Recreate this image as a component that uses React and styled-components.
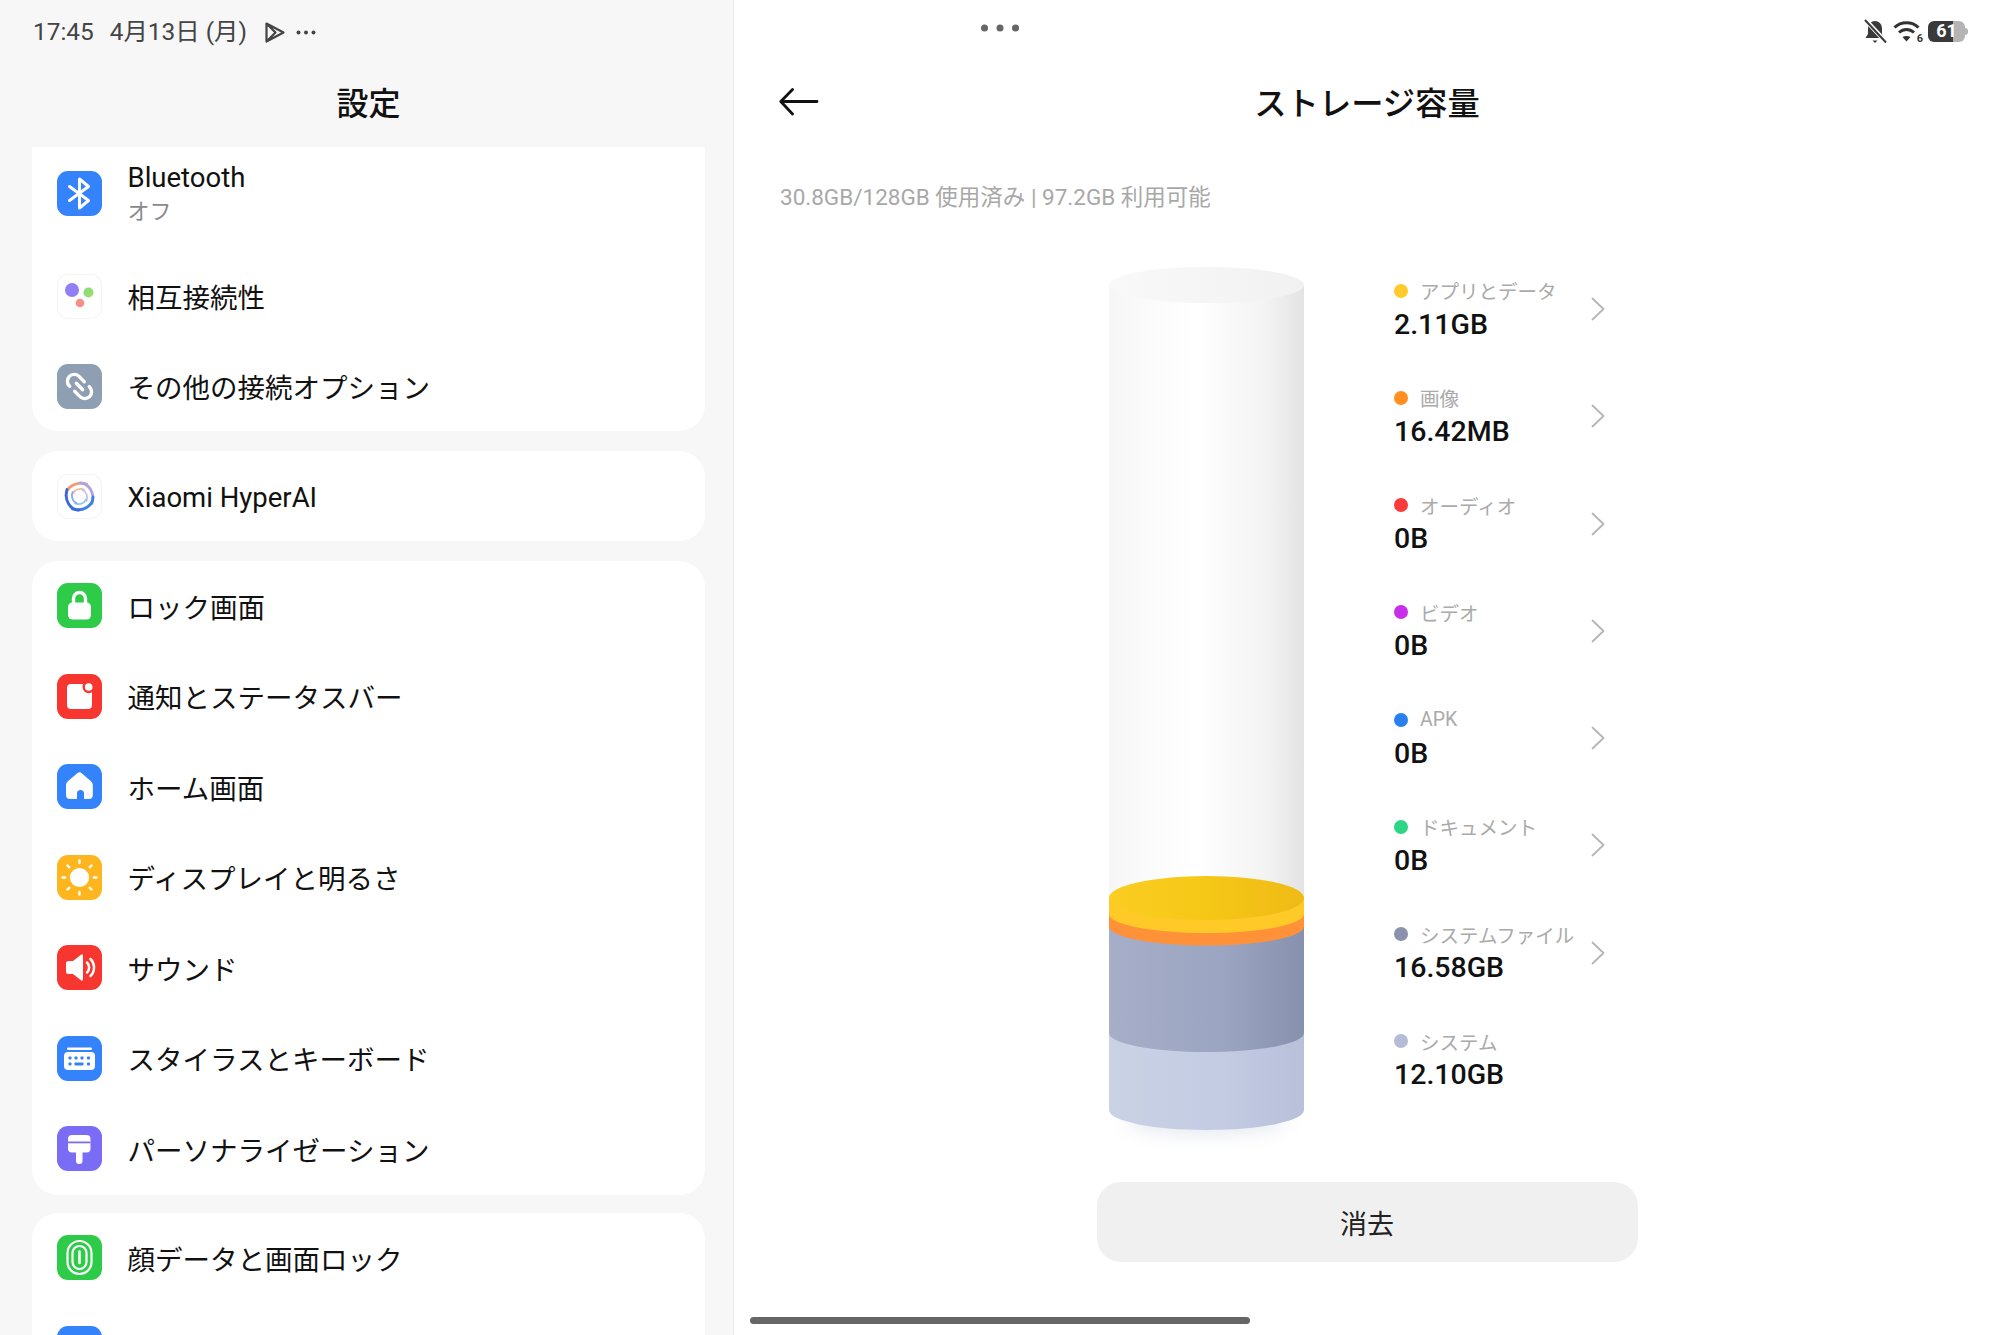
import React from "react";
import styled, { createGlobalStyle } from "styled-components";

const Global = createGlobalStyle`
  html, body { margin: 0; padding: 0; background: #fff; }
  body { font-family: Roboto, "Noto Sans CJK JP", sans-serif; -webkit-font-smoothing: antialiased; }
  #root { width: 2000px; height: 1335px; }
`;

const Screen = styled.div`
  position: relative;
  display: flex;
  width: 2000px;
  height: 1335px;
  overflow: hidden;
`;
const SidePanel = styled.aside`
  flex: 0 0 734px;
  height: 100%;
  box-sizing: border-box;
  padding: 0 28px 0 32px;
  background: #f7f7f7;
  border-right: 1px solid #ededed;
  overflow: hidden;
`;
const MainPanel = styled.main`
  flex: 1;
  display: flex;
  flex-direction: column;
  height: 100%;
  background: #fff;
`;
const LeftStatus = styled.div`
  height: 64px;
  margin-left: 1px;
  display: flex;
  align-items: center;
  color: #444;
  font-size: 24.4px;
  line-height: 1;
`;
const Clock = styled.span`
  margin-right: 16px;
`;
const DateText = styled.span`
  margin-right: 17px;
`;
const StatusDots = styled.svg`
  margin-left: 10px;
`;
const SideTitle = styled.h1`
  margin: 0;
  box-sizing: border-box;
  height: 78px;
  padding-bottom: 4px;
  display: flex;
  align-items: center;
  justify-content: center;
  font-size: 32px;
  font-weight: 500;
  color: #111;
`;
const Card = styled.section`
  margin-top: ${(p) => p.$gap}px;
  background: #fff;
  border-radius: ${(p) => (p.$clipTop ? "0 0 26px 26px" : "26px")};
`;
const Row = styled.div`
  box-sizing: border-box;
  height: ${(p) => p.$h || 90.5}px;
  padding: 0 25px ${(p) => p.$pb ?? 1.5}px;
  display: flex;
  align-items: center;
  gap: 25.5px;
`;
const IconBox = styled.div`
  flex: 0 0 45px;
  width: 45px;
  height: 45px;
  border-radius: 11px;
  background: ${(p) => p.$bg};
  box-shadow: ${(p) => (p.$outlined ? "inset 0 0 0 1px #f4f4f4" : "none")};
  overflow: hidden;
  svg { display: block; }
`;
const RowTexts = styled.div`
  display: flex;
  flex-direction: column;
  margin-top: ${(p) => p.$mt ?? 6}px;
`;
const RowTitle = styled.div`
  font-size: 27.5px;
  line-height: 36px;
  color: #111;
`;
const RowSub = styled.div`
  font-size: 22px;
  line-height: 32px;
  color: #8a8a8a;
`;
const RightStatus = styled.div`
  height: 62px;
  flex: none;
  display: flex;
  align-items: center;
  justify-content: flex-end;
  padding-right: 32px;
  gap: 6px;
`;
const WifiWrap = styled.div`
  position: relative;
  width: 29px;
  height: 24px;
`;
const WifiBadge = styled.span`
  position: absolute;
  right: -1px;
  bottom: -2px;
  font-size: 11px;
  font-weight: 700;
  color: #333;
`;
const Battery = styled.div`
  position: relative;
  width: 40px;
  height: 21px;
`;
const BatteryTrack = styled.div`
  width: 37px;
  height: 21px;
  border-radius: 6px;
  background: linear-gradient(90deg, #3a3a3a 0 68%, #b4b4b4 68% 100%);
  display: flex;
  align-items: center;
  justify-content: center;
  font-size: 18px;
  font-weight: 700;
  color: #fff;
  line-height: 1;
`;
const BatteryCap = styled.div`
  position: absolute;
  right: 0;
  top: 7px;
  width: 3px;
  height: 7px;
  border-radius: 0 3px 3px 0;
  background: #b4b4b4;
`;
const Header = styled.header`
  position: relative;
  flex: none;
  box-sizing: border-box;
  height: 82px;
  padding-bottom: 4px;
  display: flex;
  align-items: center;
  justify-content: center;
`;
const BackArrow = styled.svg`
  position: absolute;
  left: 45px;
  top: 26px;
`;
const MainTitle = styled.h2`
  margin: 0;
  font-size: 32.3px;
  font-weight: 500;
  color: #111;
`;
const Usage = styled.div`
  flex: none;
  height: 32px;
  margin-top: 37px;
  margin-left: 46px;
  font-size: 22.5px;
  line-height: 32px;
  color: #a8a8a8;
`;
const ChartArea = styled.div`
  flex: none;
  height: 926px;
  margin-top: 43px;
  padding-left: 375px;
  display: flex;
  align-items: flex-start;
  gap: 90px;
`;
const CylinderSvg = styled.svg`
  flex: none;
  margin-top: 11px;
  overflow: visible;
`;
const Legend = styled.ul`
  list-style: none;
  margin: 0;
  padding: 0;
  width: 211px;
`;
const LegendItem = styled.li`
  box-sizing: border-box;
  height: 107.25px;
  padding-top: 2px;
  display: flex;
  align-items: center;
  justify-content: space-between;
`;
const LegendLabel = styled.div`
  display: flex;
  align-items: center;
  gap: 12px;
  height: 28px;
  font-size: 19.5px;
  color: #aaa;
  white-space: nowrap;
`;
const Dot = styled.span`
  flex: none;
  width: 14px;
  height: 14px;
  border-radius: 50%;
  background: ${(p) => p.$color};
`;
const LegendValue = styled.div`
  height: 40px;
  line-height: 40px;
  font-size: 28.5px;
  font-weight: 500;
  color: #111;
`;
const ChevronSvg = styled.svg`
  margin-top: -3px;
`;
const EraseButton = styled.button`
  flex: none;
  align-self: center;
  width: 541px;
  height: 80px;
  border: none;
  border-radius: 24px;
  background: #f0f0f0;
  color: #222;
  font-family: inherit;
  font-size: 27px;
`;
const Handle = styled.svg`
  position: absolute;
  left: 980px;
  top: 23px;
`;
const HomeBar = styled.div`
  position: absolute;
  left: 750px;
  top: 1317px;
  width: 500px;
  height: 7px;
  border-radius: 4px;
  background: #666;
`;

const W = "#fff";
const S = { width: 45, height: 45, viewBox: "0 0 45 45", fill: "none" };

const BluetoothIcon = () => (
  <IconBox $bg="#3483fb"><svg {...S}><path d="M12.5 15.5 31.5 29.5 22.5 37V8L31.5 15.5 12.5 29.5" stroke={W} strokeWidth="3" strokeLinecap="round" strokeLinejoin="round"/></svg></IconBox>
);
const InteropIcon = () => (
  <IconBox $bg="#fff" $outlined><svg {...S}>
    <defs><linearGradient id="gg" x1="0" y1="0" x2="1" y2="1"><stop offset="0" stopColor="#7fdc7c"/><stop offset="1" stopColor="#a8dc6a"/></linearGradient></defs>
    <circle cx="15" cy="16" r="7" fill="#917ff5"/><circle cx="31.5" cy="18.5" r="5" fill="url(#gg)"/><circle cx="23" cy="29" r="4.3" fill="#f98f84"/>
  </svg></IconBox>
);
const LinkIcon = () => (
  <IconBox $bg="#8e9fb3"><svg {...S}><g transform="rotate(45 22.5 22.5)" stroke={W} strokeWidth="3.4" strokeLinecap="round">
    <path d="M22.500 15.700H15a6.800 6.800 0 0 0 0 13.600H15.500"/><path d="M22.500 29.300H30a6.800 6.800 0 0 0 0-13.600H29.500"/><path d="M18 22.500H27"/>
  </g></svg></IconBox>
);
const swirl = [
  { a: 0, outer: "#f29a6a", inner: "#f4b59c" },
  { a: 90, outer: "#b0a4e0", inner: "#c4c2ee" },
  { a: 180, outer: "#3f7fe6", inner: "#8cc0f0" },
  { a: 270, outer: "#3a6ad8", inner: "#86a8ec" },
];
const HyperIcon = () => (
  <IconBox $bg="#fff" $outlined><svg {...S} strokeLinecap="round">
    {swirl.map((s) => (
      <g key={s.a} transform={`rotate(${s.a} 22.5 22.5)`}>
        <path d="M9 22C9 13 19 7 29.500 10" stroke={s.outer} strokeWidth="2.800"/>
        <path d="M16 19.500C18 15 23 14 27 15.500" stroke={s.inner} strokeWidth="1.800"/>
      </g>
    ))}
  </svg></IconBox>
);
const LockIcon = () => (
  <IconBox $bg="#2dcb47"><svg {...S}><path d="M16.5 21V15.5a6 6 0 0 1 12 0V21" stroke={W} strokeWidth="3.4"/><rect x="11" y="19.5" width="23" height="17" rx="4.5" fill={W}/></svg></IconBox>
);
const NotifyIcon = () => (
  <IconBox $bg="#f7372f"><svg {...S}><rect x="10" y="10" width="25" height="25" rx="4" fill={W}/><circle cx="31.7" cy="13" r="6.2" fill="#f7372f"/><circle cx="31.7" cy="13" r="3.8" fill={W}/></svg></IconBox>
);
const HomeIcon = () => (
  <IconBox $bg="#3483fb"><svg {...S}><path fillRule="evenodd" clipRule="evenodd" d="M20.3 9.2a3.4 3.4 0 0 1 4.4 0l9.3 8a5 5 0 0 1 1.8 3.8V31a4 4 0 0 1-4 4h-4.8v-5.5a3.5 3.5 0 0 0-7 0V35H13a4 4 0 0 1-4-4V21a5 5 0 0 1 1.8-3.8z" fill={W}/></svg></IconBox>
);
const SunIcon = () => (
  <IconBox $bg="#ffb61e"><svg {...S}><circle cx="22.5" cy="22.5" r="9.6" fill={W}/>
    <g stroke={W} strokeWidth="2.4" strokeLinecap="round">
      {[0,45,90,135,180,225,270,315].map((a) => (<path key={a} d="M22.5 5.5V8" transform={`rotate(${a} 22.5 22.5)`}/>))}
    </g></svg></IconBox>
);
const SoundIcon = () => (
  <IconBox $bg="#f7372f"><svg {...S}><path d="M9 18.5a2.5 2.5 0 0 1 2.5-2.5H16l8-6.3a1.2 1.2 0 0 1 2 1V34.3a1.2 1.2 0 0 1-2 1L16 29h-4.500a2.500 2.500 0 0 1-2.500-2.500z" fill={W}/><path d="M30 17.500a7 7 0 0 1 0 10M33.500 14a12 12 0 0 1 0 17" stroke={W} strokeWidth="2.500" strokeLinecap="round"/></svg></IconBox>
);
const KeyboardIcon = () => (
  <IconBox $bg="#3483fb"><svg {...S}>
    <rect x="10" y="11.500" width="25" height="2.500" rx="1.250" fill={W}/><rect x="7" y="16" width="31" height="18" rx="4" fill={W}/>
    <g fill="#3483fb"><rect x="11.500" y="20.500" width="3" height="3" rx=".8"/><rect x="17.500" y="20.500" width="3" height="3" rx=".8"/><rect x="23.500" y="20.500" width="3" height="3" rx=".8"/><rect x="30" y="20.500" width="3" height="3" rx=".8"/><rect x="11.500" y="26.500" width="3" height="3" rx=".8"/><rect x="17.500" y="26.500" width="9" height="3" rx=".8"/><rect x="30" y="26.500" width="3" height="3" rx=".8"/></g>
  </svg></IconBox>
);
const BrushIcon = () => (
  <IconBox $bg="#7a6cf5"><svg {...S}><rect x="11" y="9" width="22.500" height="17.500" rx="4" fill={W}/><rect x="11" y="15.500" width="22.500" height="1.800" fill="#7a6cf5"/><rect x="19" y="24" width="6.500" height="14" rx="3" fill={W}/></svg></IconBox>
);
const FingerIcon = () => (
  <IconBox $bg="#2dcb47"><svg {...S} stroke={W} strokeWidth="2.200"><rect x="10.500" y="6" width="24" height="33" rx="12"/><rect x="15.500" y="11" width="14" height="23" rx="7"/><path d="M22.500 16.500V28" strokeLinecap="round" strokeWidth="2.600"/></svg></IconBox>
);
const BlankBlueIcon = () => <IconBox $bg="#3483fb" />;

const group1 = [
  { icon: <InteropIcon />, title: "相互接続性", h: 91 },
  { icon: <LinkIcon />, title: "その他の接続オプション", h: 89.5 },
];
const group3 = [
  { icon: <LockIcon />, title: "ロック画面" },
  { icon: <NotifyIcon />, title: "通知とステータスバー" },
  { icon: <HomeIcon />, title: "ホーム画面" },
  { icon: <SunIcon />, title: "ディスプレイと明るさ" },
  { icon: <SoundIcon />, title: "サウンド" },
  { icon: <KeyboardIcon />, title: "スタイラスとキーボード" },
  { icon: <BrushIcon />, title: "パーソナライゼーション" },
];
const legend = [
  { color: "#ffcb2b", label: "アプリとデータ", value: "2.11GB", more: true },
  { color: "#ff8f1f", label: "画像", value: "16.42MB", more: true },
  { color: "#f93b3b", label: "オーディオ", value: "0B", more: true },
  { color: "#c92ee8", label: "ビデオ", value: "0B", more: true },
  { color: "#2a7fee", label: "APK", value: "0B", more: true },
  { color: "#2ed585", label: "ドキュメント", value: "0B", more: true },
  { color: "#8a92ae", label: "システムファイル", value: "16.58GB", more: true },
  { color: "#b4bcd8", label: "システム", value: "12.10GB", more: false },
];

const Cylinder = () => {
  const L = 0, R = 195, rx = 97.5;
  const seg = (top, bottom, rb) => `M${L} ${top}V${bottom}A${rx} ${rb} 0 0 0 ${R} ${bottom}V${top}Z`;
  return (
    <CylinderSvg width="195" height="885" viewBox="0 267 195 885">
      <defs>
        <linearGradient id="bodyW" x1="0" x2="1" y1="0" y2="0"><stop offset="0" stopColor="#f6f6f6"/><stop offset=".15" stopColor="#fafafa"/><stop offset=".45" stopColor="#fff"/><stop offset=".8" stopColor="#f3f3f3"/><stop offset="1" stopColor="#e3e3e3"/></linearGradient>
        <linearGradient id="topW" x1="0" x2="1" y1="0" y2="0"><stop offset="0" stopColor="#f9f9f9"/><stop offset="1" stopColor="#f1f1f1"/></linearGradient>
        <linearGradient id="sysF" x1="0" x2="1" y1="0" y2="0"><stop offset="0" stopColor="#a6aec9"/><stop offset=".6" stopColor="#9ba4c0"/><stop offset="1" stopColor="#8790ae"/></linearGradient>
        <linearGradient id="sys" x1="0" x2="1" y1="0" y2="0"><stop offset="0" stopColor="#cad2e5"/><stop offset=".6" stopColor="#c3cbe3"/><stop offset="1" stopColor="#b8c0da"/></linearGradient>
        <linearGradient id="topY" x1="0" x2="1" y1="0" y2="0"><stop offset="0" stopColor="#fbcd22"/><stop offset=".5" stopColor="#f5c716"/><stop offset="1" stopColor="#efba16"/></linearGradient>
        <filter id="soft" x="-20%" y="-100%" width="140%" height="300%"><feGaussianBlur stdDeviation="9"/></filter>
      </defs>
      <ellipse cx="97.5" cy="1120" rx="80" ry="15" fill="#aab2cc" opacity=".28" filter="url(#soft)"/>
      <path d={seg(285, 900, 20)} fill="url(#bodyW)"/>
      <ellipse cx="97.5" cy="285" rx={rx} ry="18" fill="url(#topW)"/>
      <path d={seg(1000, 1110, 20)} fill="url(#sys)"/>
      <path d={seg(920, 1033, 19)} fill="url(#sysF)"/>
      <path d={seg(905, 926.500, 19)} fill="#ff9138"/>
      <path d={seg(898, 914, 19)} fill="#ffca28"/>
      <ellipse cx="97.5" cy="898" rx={rx} ry="22" fill="url(#topY)"/>
    </CylinderSvg>
  );
};

const Chevron = () => (
  <ChevronSvg width="14" height="24" viewBox="0 0 14 24" fill="none"><path d="M1.500 1.500 12.500 12 1.500 22.500" stroke="#b5b5b5" strokeWidth="1.800" strokeLinecap="round" strokeLinejoin="round"/></ChevronSvg>
);

export default function App() {
  return (
    <Screen>
      <Global />
      <SidePanel>
        <LeftStatus>
          <Clock>17:45</Clock>
          <DateText>4月13日 (月)</DateText>
          <svg width="22" height="23" viewBox="0 0 22 23" fill="none" stroke="#444" strokeWidth="2.200" strokeLinejoin="round"><path d="M2.500 2.500 19.500 11.500 2.500 20.500zM2.500 2.500 11.500 11.500 2.500 20.500"/></svg>
          <StatusDots width="20" height="5" viewBox="0 0 20 5" fill="#444"><circle cx="2.500" cy="2.500" r="2"/><circle cx="10" cy="2.500" r="2"/><circle cx="17.500" cy="2.500" r="2"/></StatusDots>
        </LeftStatus>
        <SideTitle>設定</SideTitle>
        <Card $gap={4.5} $clipTop>
          <Row $h={104} $pb={10}>
            <BluetoothIcon />
            <RowTexts $mt={0}>
              <RowTitle>Bluetooth</RowTitle>
              <RowSub>オフ</RowSub>
            </RowTexts>
          </Row>
          {group1.map((r) => (
            <Row key={r.title} $h={r.h} $pb={0}>{r.icon}<RowTexts><RowTitle>{r.title}</RowTitle></RowTexts></Row>
          ))}
        </Card>
        <Card $gap={20}>
          <Row $h={90} $pb={0}><HyperIcon /><RowTexts $mt={4}><RowTitle>Xiaomi HyperAI</RowTitle></RowTexts></Row>
        </Card>
        <Card $gap={20}>
          {group3.map((r) => (
            <Row key={r.title}>{r.icon}<RowTexts><RowTitle>{r.title}</RowTitle></RowTexts></Row>
          ))}
        </Card>
        <Card $gap={18.5}>
          <Row><FingerIcon /><RowTexts><RowTitle>顔データと画面ロック</RowTitle></RowTexts></Row>
          <Row><BlankBlueIcon /></Row>
        </Card>
      </SidePanel>
      <MainPanel>
        <RightStatus>
          <svg width="24" height="25" viewBox="0 0 24 25" fill="none">
            <path d="M12 2a7 7 0 0 0-7 7v6l-2.500 4h19L19 15V9a7 7 0 0 0-7-7z" fill="#3a3a3a"/><path d="M9.500 21.500h5l-2.500 2.500z" fill="#3a3a3a"/>
            <path d="M2 0.500 23 23" stroke="#fff" strokeWidth="4.500"/><path d="M2 1 23 23.500" stroke="#3a3a3a" strokeWidth="2"/>
          </svg>
          <WifiWrap>
            <svg width="29" height="24" viewBox="0 0 29 24" fill="none" stroke="#333" strokeWidth="3"><path d="M1.500 8.500C8 2 19 2 25.500 8.500"/><path d="M6 13.500c4.500-4 10.500-4 15 0"/><path d="M9.500 18 13.500 22.500 17.500 18c-2.500-1.500-5.500-1.500-8 0z" fill="#333" stroke="none"/></svg>
            <WifiBadge>6</WifiBadge>
          </WifiWrap>
          <Battery>
            <BatteryTrack>61</BatteryTrack>
            <BatteryCap />
          </Battery>
        </RightStatus>
        <Header>
          <BackArrow width="40" height="28" viewBox="0 0 40 28" fill="none" stroke="#111" strokeWidth="2.800" strokeLinecap="round" strokeLinejoin="round"><path d="M38 13.500H2.500M13.500 1.500 1.800 13.500 13.500 26"/></BackArrow>
          <MainTitle>ストレージ容量</MainTitle>
        </Header>
        <Usage>30.8GB/128GB 使用済み | 97.2GB 利用可能</Usage>
        <ChartArea>
          <Cylinder />
          <Legend>
            {legend.map((item) => (
              <LegendItem key={item.label}>
                <div>
                  <LegendLabel><Dot $color={item.color} />{item.label}</LegendLabel>
                  <LegendValue>{item.value}</LegendValue>
                </div>
                {item.more && <Chevron />}
              </LegendItem>
            ))}
          </Legend>
        </ChartArea>
        <EraseButton>消去</EraseButton>
      </MainPanel>
      <Handle width="40" height="10" viewBox="0 0 40 10" fill="#666"><circle cx="4.500" cy="5" r="3.500"/><circle cx="20" cy="5" r="3.500"/><circle cx="35.500" cy="5" r="3.500"/></Handle>
      <HomeBar />
    </Screen>
  );
}
